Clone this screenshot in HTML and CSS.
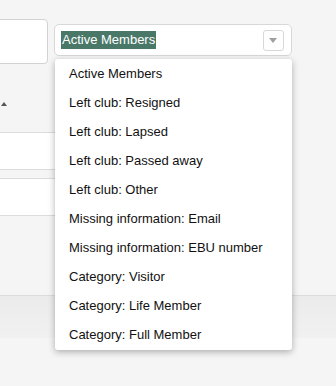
FILE: index.html
```html
<!DOCTYPE html>
<html lang="en">
  <head>
    <meta charset="UTF-8" />
    <meta name="viewport" content="width=device-width, initial-scale=1.0" />
    <title>Members</title>
    <link rel="stylesheet" href="styles.css">
  </head>
  <body>
    <div class="page">
      <div class="toolbar">
        <div class="search-box"></div>
        <div class="filter">
          <div class="filter-select">
            <span class="filter-value">Active Members</span>
            <span class="filter-arrow"></span>
          </div>
          <ul class="filter-menu">
            <li>Active Members</li>
            <li>Left club: Resigned</li>
            <li>Left club: Lapsed</li>
            <li>Left club: Passed away</li>
            <li>Left club: Other</li>
            <li>Missing information: Email</li>
            <li>Missing information: EBU number</li>
            <li>Category: Visitor</li>
            <li>Category: Life Member</li>
            <li>Category: Full Member</li>
          </ul>
        </div>
      </div>

      <div class="sort-row">
        <span class="sort-icon"></span>
      </div>

      <div class="member-table">
        <div class="member-row"></div>
        <div class="member-row"></div>
      </div>

      <div class="footer"></div>
    </div>
  </body>
</html>
```

FILE: styles.css
```css
* {
  margin: 0;
  padding: 0;
  box-sizing: border-box;
  font-family: "Liberation Sans", Arial, sans-serif;
}

body {
  background: #f5f5f5;
  color: #111;
  overflow: hidden;
}

.page {
  width: 336px;
  height: 386px;
}

.toolbar {
  display: flex;
  align-items: flex-start;
  gap: 6px;
  padding-top: 19px;
  position: relative;
  z-index: 2;
}

.search-box {
  width: 58px;
  height: 45px;
  margin-left: -10px;
  background: #fff;
  border: 1px solid #d2d2d2;
  border-radius: 4px;
}

.filter {
  position: relative;
  margin-top: 5px;
  width: 238px;
}

.filter-select {
  height: 32px;
  background: #fff;
  border: 1px solid #d8d8d8;
  border-radius: 5px;
  display: flex;
  align-items: center;
  justify-content: space-between;
  padding: 0 7px 0 6px;
}

.filter-value {
  background: #4a7868;
  color: #fff;
  font-size: 13px;
  line-height: 18px;
  padding: 0 1px;
}

.filter-arrow {
  width: 21px;
  height: 21px;
  border: 1px solid #d8d8d8;
  border-radius: 3px;
  position: relative;
}

.filter-arrow::after {
  content: "";
  position: absolute;
  left: 5px;
  top: 7px;
  border-left: 4px solid transparent;
  border-right: 4px solid transparent;
  border-top: 5px solid #a0a0a0;
}

.filter-menu {
  list-style: none;
  position: absolute;
  top: 35px;
  left: 1px;
  width: 237px;
  background: #fff;
  border-radius: 3px;
  box-shadow: 0 2px 7px rgba(0, 0, 0, 0.3);
  padding-bottom: 1px;
}

.filter-menu li {
  height: 29px;
  line-height: 29px;
  padding-left: 14px;
  font-size: 13px;
  color: #111;
}

.sort-row {
  height: 68px;
  padding-top: 38px;
}

.sort-icon {
  display: block;
  width: 0;
  margin-left: 1px;
  border-left: 3px solid transparent;
  border-right: 3px solid transparent;
  border-bottom: 4px solid #555;
}

.member-table {
  width: 280px;
  display: flex;
  flex-direction: column;
  gap: 8px;
}

.member-row {
  height: 38px;
  background: #fff;
  border-top: 1px solid #dcdcdc;
  border-bottom: 1px solid #dcdcdc;
}

.footer {
  margin-top: 79px;
  height: 43px;
  border-top: 1px solid #dcdcdc;
  background: linear-gradient(#ebebeb, #f1f1f1);
}
```
